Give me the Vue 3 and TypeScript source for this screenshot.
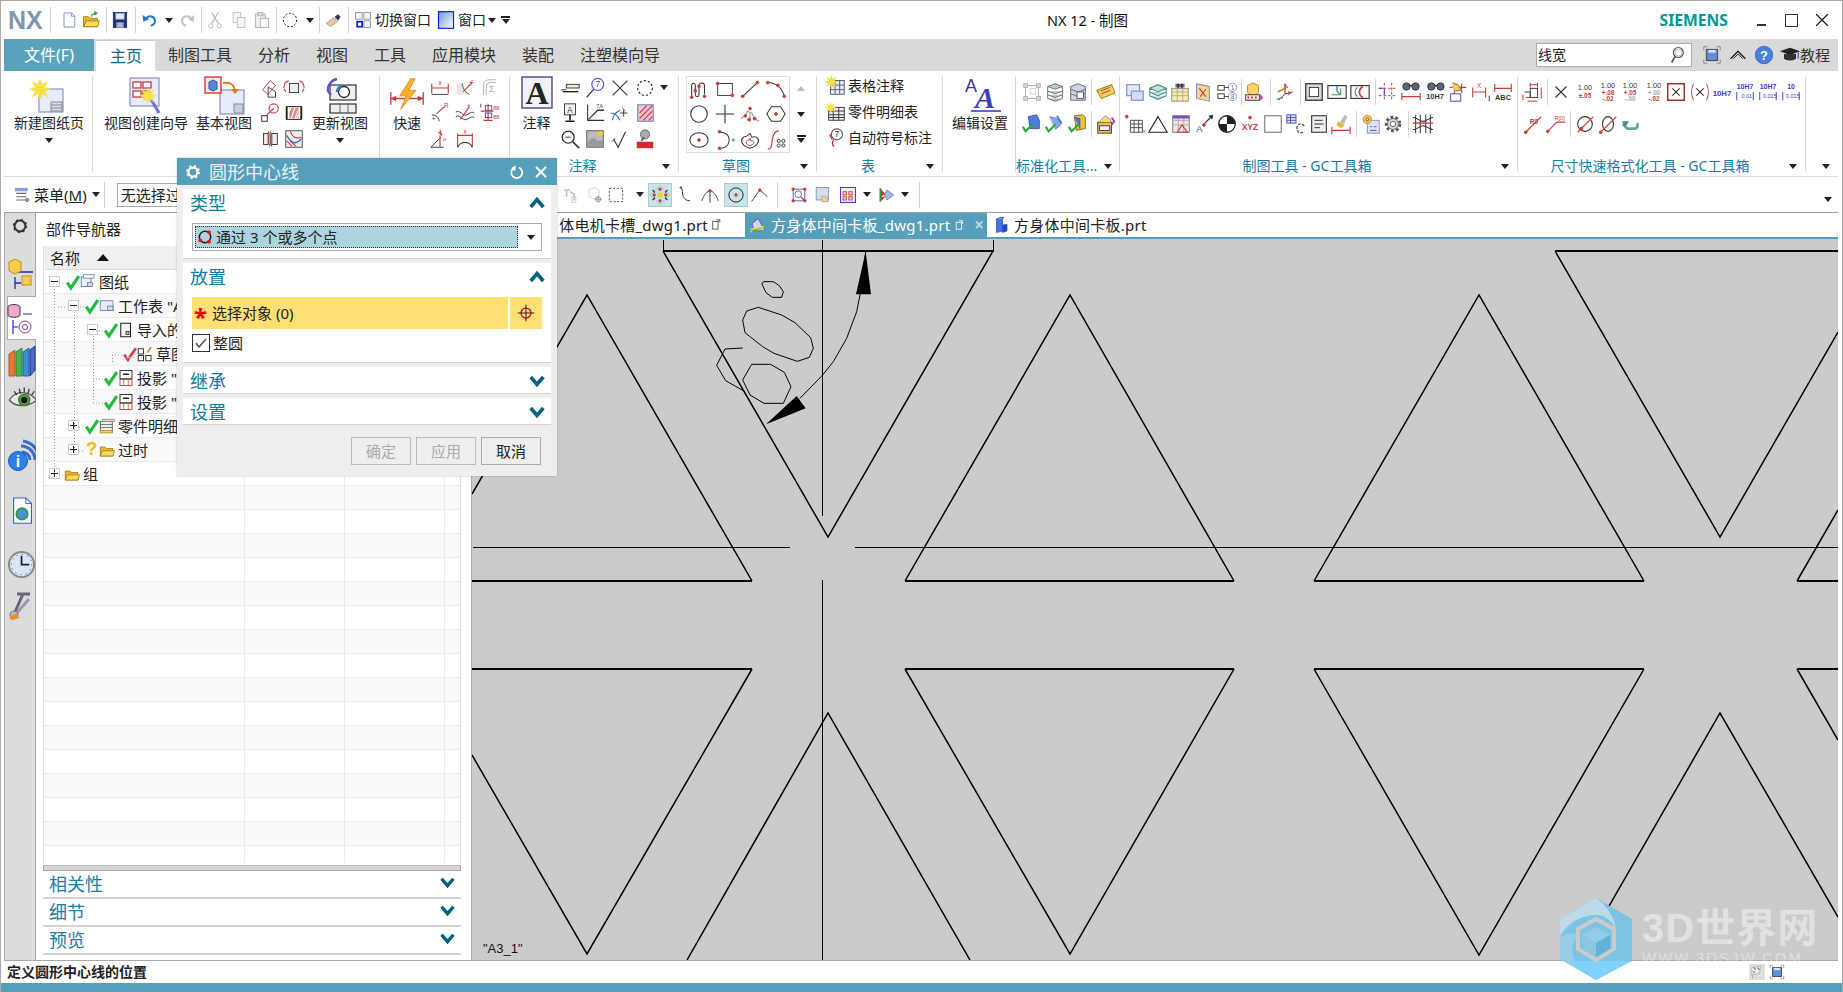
<script setup lang="ts">
import { h } from 'vue'

const RED = '#c93a3a'
const LIL = '#8d8fc9'
const P = (d: string, s = '#333', w = 1, f = 'none') => `<path d="${d}" fill="${f}" stroke="${s}" stroke-width="${w}"/>`
const F = (d: string, f: string) => `<path d="${d}" fill="${f}"/>`
const R = (x: number, y: number, w: number, hh: number, s = '#333', f = 'none', sw = 1) => `<rect x="${x}" y="${y}" width="${w}" height="${hh}" fill="${f}" stroke="${s}" stroke-width="${sw}"/>`
const C = (x: number, y: number, r: number, s = '#333', f = 'none', sw = 1) => `<circle cx="${x}" cy="${y}" r="${r}" fill="${f}" stroke="${s}" stroke-width="${sw}"/>`
const T = (x: number, y: number, t: string, c = '#333', fs = 8, fw = 400, fam = 'Liberation Sans') => `<text x="${x}" y="${y}" fill="${c}" font-size="${fs}" font-weight="${fw}" font-family="${fam}" text-anchor="middle">${t}</text>`
const dot = (x: number, y: number) => C(x, y, 1.5, RED, RED)
const star = (x: number, y: number, r: number) => F(`M${x} ${y - r}l${r * 0.25} ${r * 0.7} ${r * 0.7} -${r * 0.4} -${r * 0.4} ${r * 0.7} ${r * 0.7} ${r * 0.25} -${r * 0.7} ${r * 0.25} ${r * 0.4} ${r * 0.7} -${r * 0.7} -${r * 0.4} -${r * 0.25} ${r * 0.7} -${r * 0.25} -${r * 0.7} -${r * 0.7} ${r * 0.4} ${r * 0.4} -${r * 0.7} -${r * 0.7} -${r * 0.25} ${r * 0.7} -${r * 0.25} -${r * 0.4} -${r * 0.7} ${r * 0.7} ${r * 0.4}z`, '#f5e04a')
const folder = P('M3 8h6l2 2h9v10H3z', '#9a7412', 1, '#e9b92e') + P('M3 20l3-7h16l-2 7z', '#9a7412', 1, '#fbd95c')

const I: Record<string, string> = {
  new: P('M6 3.5h9l4 4v13H6z', '#7b8fd0', 1.2, '#fff') + P('M15 3.5v4h4', '#7b8fd0'),
  open: folder + P('M12 8c1-3 3-4 6-4m-2-2l3 2-3 2', '#3aa03a', 1.6),
  save: R(4, 3, 16, 18, '#1d2f7a', '#1d2f7a') + R(7, 4, 10, 7, '#9ab', '#e4ecf4') + R(8, 15, 8, 6, '#889', '#aeb6c6'),
  undo: P('M7 10c4-4 11-3 11 3 0 3-2 5-5 6', '#2a76c8', 2.4) + F('M3 6l1 8 7-3z', '#2a76c8'),
  redo: P('M17 10c-4-4-11-3-11 3 0 3 2 5 5 6', '#c4c4c4', 2.4) + F('M21 6l-1 8-7-3z', '#c4c4c4'),
  cut: P('M8 3l8 13M16 3L8 16', '#bbb', 1.5) + C(7, 19, 2.6, '#bbb') + C(17, 19, 2.6, '#bbb'),
  copy: R(5, 3, 9, 12, '#bbb', '#f6f6f6') + R(10, 9, 9, 12, '#bbb', '#f6f6f6'),
  paste: R(4, 5, 12, 16, '#aaa', '#eee') + R(10, 10, 10, 11, '#aaa', '#fafafa') + R(7, 3, 6, 4, '#aaa', '#ddd'),
  dcirc: `<circle cx="12" cy="12" r="8" fill="none" stroke="#222" stroke-width="1.2" stroke-dasharray="2.5 2"/>`,
  brush: P('M4 16l9-7 4 5-8 6z', '#a97', 1, '#e8c9a0') + F('M14 8l4-3 3 3-3 5z', '#335'),
  sw: R(3, 3, 8, 8, '#8490a5', '#f2f4f8') + R(13, 3, 8, 8, '#8490a5', '#f2f4f8') + R(13, 13, 8, 8, '#8490a5', '#f2f4f8') + R(5, 14, 6, 6, '#0a18e0', '#fff', 2),
  win: `<defs><linearGradient id="wg" x1="0" y1="0" x2="1" y2="1"><stop offset="0" stop-color="#6f9ad8"/><stop offset="1" stop-color="#fff"/></linearGradient></defs>` + R(3, 2, 18, 20, '#0a20e0', 'url(#wg)', 1.4),

  sheet: R(10, 13, 24, 23, LIL, '#e7ecfa', 1.2) + R(22, 26, 11, 9, '#888', '#d8dcea') + P('M22 29h11M22 32h11', '#888') + star(11, 11, 9),
  wiz: R(4, 2, 29, 28, LIL, '#e7ecfa', 1.2) + R(7, 6, 8, 6, RED, '#fff', 1.3) + R(17, 6, 8, 6, RED, '#fff', 1.3) + R(7, 15, 8, 6, RED, '#fff', 1.3) + R(17, 15, 6, 6, RED, '#fff', 1.3) + P('M22 18l11 19', '#6f6fc8', 3) + star(22, 18, 7),
  basev: R(16, 14, 24, 24, LIL, '#e7ecfa', 1.2) + R(30, 28, 9, 9, '#888', '#ccd') + R(1, 1, 16, 16, '#d33', '#f6e7ea', 1.4) + P('M5 6l4-2 4 2v7l-4 2-4-2z', '#2f5aa8', 1, '#5b87d2') + P('M19 7c7-1 11 1 12 8', '#e07a1a', 2) + F('M27 13h8l-4 5z', '#e07a1a'),
  updv: R(10, 9, 26, 15, '#333', '#eee', 1.2) + R(10, 28, 26, 9, '#333', '#eee', 1.2) + P('M10 31v6M20 28v9M28 28v9', '#666') + C(24, 16, 5.5, '#222', '#fff', 1.3) + P('M17 3a11 11 0 0 0-9 12l3 4', '#5a55d8', 2.4) + P('M22 10a6 6 0 0 0-5 6', '#3c78d0', 2.5),
  quick: P('M2 25h36M2 18v14M38 18v14', RED, 1.5) + F('M2 25l6-3v6zM38 25l-6-3v6z', RED) + F('M24 3L12 22h7l-6 15 17-21h-8l7-13z', '#f3b12c') + P('M24 3L12 22h7l-6 15 17-21h-8l7-13z', '#e57a18', 0.8),
  noteA: R(1, 1, 30, 31, '#3d3a80', '#f1f1f6', 1.3) + T(16, 28, 'A', '#222', 32, 700, 'Liberation Serif'),
  editA: T(11, 16, 'A', '#3e3a9e', 18, 400, 'Liberation Sans') + `<text x="25" y="32" fill="#3e3fb8" font-size="30" font-weight="700" font-style="italic" font-family="Liberation Serif" text-anchor="middle">A</text>` + P('M11 35h30', '#3e3fb8', 1.6),

  a1: P('M4 14l8-10 6 5-8 10z', RED, 1, 'none') + P('M10 11l8 5v6H10z', '#333', 1),
  a2: R(7, 7, 10, 10, '#333', '#eee') + P('M1 12c0-5 2-7 5-8M23 12c0-5-2-7-5-8M1 13l2 3M23 13l-2 3', RED, 1.2),
  a3: C(16, 7, 5, RED, '#fff', 1.2) + P('M4 19l12-12', RED, 1.4) + R(3, 15, 6, 6, '#222', '#fff'),
  a4: R(4, 5, 16, 14, '#222', '#fff') + P('M4 5v14M20 5v14', '#222', 2) + `<rect x="7" y="6" width="10" height="12" fill="#d88"/>` + P('M9 6l-2 4M13 6l-4 12M17 8l-4 10M17 14l-2 4', '#fff', 1.2),
  a5: R(5, 6, 5, 12, '#333', '#eee') + R(14, 6, 6, 12, '#333', '#eee') + P('M10 4c3 4-2 8 2 16', RED, 1.4) + P('M12 4c3 4-2 8 2 16', '#333'),
  a6: R(3, 3, 18, 18, '#444', '#eee') + P('M4 8c6 10 10 10 16 4', '#3f63c8', 1.4) + P('M8 4c2 6 6 8 12 6M4 14l6 6M8 14l6 6', RED, 1.2),
  q1: P('M3 12h18M3 7v11M21 7v11', RED, 1.2) + T(12, 9, 'x', RED, 7) + P('M3 19h18', '#333', 1),
  q2: F('M3 7h6c1 7 4 10 8 12H3z', '#e4e4e4') + P('M9 7c1 7 4 10 8 12', '#444') + P('M10 16L20 6M20 6l-3 0', RED, 1.2) + T(20, 6, 'c', RED, 6),
  q3: P('M6 20V9c0-4 3-6 7-6h7M9 20V11c0-3 2-5 5-5h6', '#bbb', 1.2) + T(15, 16, 'Σ', '#aaa', 10),
  q4: P('M3 14c5 0 8 3 8 7', '#333') + P('M8 13L17 5', RED, 1.2) + T(19, 7, 'R', RED, 7) + T(5, 21, '+', '#333', 7),
  q5: P('M2 11c4-3 8 5 12 3s5-4 8-2M2 16c4-3 8 5 12 3s5-4 8-2', '#333') + P('M7 19L17 5', RED, 1.2) + T(16, 7, '+', RED, 7),
  q6: R(8, 4, 7, 5, '#3f3fb0') + R(8, 12, 7, 5, '#3f3fb0') + P('M3 2v4M3 10h14M11 2v18M6 20h10', RED, 1.2) + T(20, 9, '88', RED, 6) + T(20, 19, '88', RED, 6),
  q7: P('M2 21l11-11M2 21h14', '#333') + P('M12 8v13M10 4l4 4-2-6', RED, 1.2) + T(17, 14, 'o', RED, 6),
  q8: P('M4 6v15M20 6v15M4 8h16', RED, 1.2) + T(12, 6, 'x', RED, 7) + P('M4 21c3-7 13-7 16 0', '#333', 1.2),
  n1: P('M2 14h6', '#333') + R(8, 8, 14, 4, '#333', '#f2e9c8') + P('M4 16h17', '#222', 1.5),
  n2: P('M3 22l8-9', '#333', 1.4) + C(15, 8, 6.5, '#5c5cd0', '#fff', 1.3) + T(15, 11, '7', '#444', 9),
  n3: P('M4 4l16 16M20 4L4 20', '#333', 1.2),
  n5: R(6, 2, 12, 12, '#333', '#f3f3f3') + T(12, 12, 'A', '#333', 9) + P('M12 14v6M7 21h10', '#222', 1.8),
  n6: P('M4 3v17h18', '#333', 1.2) + P('M5 19L15 9h7', '#333', 1.4) + T(17, 7, '7A', '#444', 6) + P('M4 20l6-6', RED),
  n7: P('M2 12c5 0 7 3 10 8M4 20c0-5 4-9 8-11', '#3f63c8', 1.2) + P('M16 8v8M12 12h8', '#333') + P('M14 6l4 4', RED),
  n8: R(4, 3, 17, 18, LIL, '#f3c4cc', 1.4) + P('M6 12l8-8M6 18l14-14M10 20l10-10M16 20l4-4', '#d03a50', 1.3),
  n9: C(10, 10, 6.5, '#333', '#fff', 1.4) + P('M15 15l7 7', '#333', 1.8) + P('M7 10h6', '#333'),
  n10: R(3, 3, 18, 18, '#555', '#bcbcbc') + P('M3 18c5-8 8-8 12-3 3-2 4-1 6 1v5H3z', '#888', .5, '#9a9a9a') + C(18, 6, 2.4, '#ec3', '#ec3'),
  n11: P('M5 12l5 9 8-17', '#333', 1.2) + P('M3 15l4-4', '#333'),
  n12: F('M3 15h18v7H3z', '#d8262c') + C(12, 7, 5, '#666', '#aaa') + P('M8 14l3-4', '#666', 2),
  s1: P('M4 20V8c0-3 4-3 4 0v10c0 3 4 3 4 0V8c0-4 6-3 6 0v10', '#333', 1.1) + dot(4, 21) + dot(12, 9) + dot(18, 20) + dot(8, 14),
  s2: R(4, 6, 16, 13, '#333') + dot(4, 6) + dot(20, 19),
  s3: P('M4 20L20 5', '#333', 1.1) + dot(4, 20) + dot(20, 5),
  s4: P('M3 5c9 0 16 6 18 15', '#333', 1.1) + dot(3, 5) + dot(21, 20) + dot(14, 8),
  s5: C(12, 12, 9, '#333', 'none', 1.2),
  s6: P('M12 2v20M2 12h20', '#333', 1.2),
  s7: P('M2 17l5-3 2-5 5 2 3 6 5 3M12 21V11', '#999', 1.2) + dot(7, 14) + dot(12, 6) + dot(17, 17) + dot(11, 18),
  s8: P('M7 4h10l5 8-5 8H7l-5-8z', '#333', 1.1) + dot(12, 12),
  s9: `<ellipse cx="12" cy="12" rx="10" ry="8" fill="none" stroke="#333" stroke-width="1.1"/>` + dot(12, 12),
  s10: P('M6 3c8 1 12 5 10 12-1 4-5 6-10 6', '#333', 1.1) + dot(6, 3) + dot(6, 21) + C(21, 12, 1.3, '#999', '#999'),
  s11: P('M12 5l2 4c6-2 9 3 6 7-2 3-5 4-8 5-3-1-6-2-8-5-3-4 0-8 4-8z', '#333', 1.1) + P('M12 10l1 3c3-1 4 1 3 3-1 1-3 2-4 2-2 0-4-1-4-3s1-3 3-3z', RED, 1),
  s12: P('M3 22c5 0 4-6 5-11s3-9 7-9', RED, 1.3) + C(15, 13, 1.7, '#333') + C(20, 13, 1.7, '#333') + C(15, 18, 1.7, '#333') + C(20, 18, 1.7, '#333'),
  t1: R(6, 6, 15, 15, '#556', '#e6ecf6') + P('M6 11h15M6 16h15M11 6v15M16 6v15', '#556') + star(7, 6, 6),
  t2: R(4, 7, 17, 14, '#333', '#eee') + P('M4 11h17M4 15h17M4 18h17M9 7v14M15 7v14', '#333') + star(6, 6, 5),
  t3: C(13, 8, 6, '#555', '#fff', 1.2) + T(13, 11, '7', '#333', 9) + P('M10 14c-3 2-2 6 0 7M8 14L5 8', '#c22', 1.3),
  b1: R(5, 5, 14, 14, '#aaa', 'none', 1) + R(3, 3, 4, 4, '#aaa', '#ddd') + R(17, 3, 4, 4, '#aaa', '#ddd') + R(3, 17, 4, 4, '#aaa', '#ddd') + R(17, 17, 4, 4, '#aaa', '#ddd') + R(10, 8, 6, 6, '#ccc', 'none'),
  b2: P('M4 6l8-3 8 3-8 3zM4 11l8 3 8-3M4 15l8 3 8-3M4 19l8 3 8-3M4 6v13M20 6v13', '#667', 1, '#bcd0b8'),
  b3: P('M4 6l8-3 8 3v15H4z', '#667', 1, '#cdd4e6') + P('M4 9l8 3 8-3M4 14l8 3 8-3', '#667') + R(11, 12, 7, 7, '#557', '#fff'),
  b4: P('M2 10l16-6 4 9-15 6z', '#a8831a', 1.1, '#f3d05c') + P('M6 11l10-4M7 14l10-4', '#a33'),
  c1: P('M8 4l9-2 3 6v9H10z', '#3a50a8', 1, '#4d7fd8') + P('M2 15l3 5 8-8', '#2cab3c', 2.4),
  c2: P('M6 4l8 2 5 6-7 6', '#5a6ab0', 1, '#8aa7e6') + P('M14 3l5 8', '#48a', 2) + P('M2 15l3 5 8-8', '#2cab3c', 2.4),
  c3: P('M8 3l9-1 3 3v12l-10 2z', '#88621a', 1, '#f2c23a') + P('M8 5l6 1v11', '#3a50a8', 1, '#4d7fd8') + P('M2 15l3 5 8-8', '#2cab3c', 2.4),
  c4: R(3, 10, 15, 12, '#443', '#f2c23a') + R(5, 14, 11, 5, '#335', '#fff') + P('M5 9l6-6 6 4v3', '#98a', 1, '#f5da72') + P('M18 5l3 4-3 4', '#a040c0', 2),
  d1: R(3, 4, 14, 12, LIL, '#e0e8fa', 1.3) + R(8, 11, 13, 10, LIL, '#d0dcf8', 1.3),
  d2: P('M3 8l9-4 9 4-9 4zM3 12l9 4 9-4M3 16l9 4 9-4M3 8v8M21 8v8', '#4b8a8a', 1.1, '#bfe3d8'),
  d3: R(3, 8, 18, 14, '#888', '#fce9a3') + P('M3 12h18M3 16h18M9 8v14M15 8v14', '#aaa') + F('M7 3h10v4H7z', '#667') + P('M10 3v5M14 3v5', '#334', 1.5),
  d4: P('M5 3l14 3v16l-14-3z', LIL, 1.2, '#f2d68a') + P('M8 8l7 9M15 9l-6 8', '#b37', 1.2),
  d5: R(2, 5, 7, 5, '#333') + R(2, 14, 7, 5, '#333') + C(18, 7, 4.5, LIL) + C(18, 17, 4.5, LIL) + P('M9 7h5M9 17h5', '#333') + T(18, 10, '1', '#669', 7) + T(18, 20, '8', '#669', 7),
  d6: P('M6 5l6-3 6 3v8l-6 3-6-3z', '#c0902a', 1, '#f5d569') + R(4, 15, 15, 6, '#333', '#eee') + P('M6 18h2M10 18h2M14 18h2', RED, 2) + F('M20 14l3 4-3 4z', '#a040c0'),
  d7: P('M12 14V3M12 14l8-2M12 14l-7 7', '#333', 1) + P('M12 3l3 4-3 1zM20 12l-4 3 0-4', RED, 1) + P('M4 12l8-4', '#e0801a', 2) + P('M3 20l7-2', '#2a2', 1.4),
  d8: R(3, 3, 18, 18, '#333', '#ddd', 1.4) + R(7, 7, 10, 10, '#333', '#fff', 1) + P('M4 18l3-3M18 21l3-3', '#999'),
  d9: R(2, 5, 20, 14, '#333', '#f7f7f7', 1.2) + P('M12 5v6l3 3', '#3f63c8', 1.3) + P('M6 15h10M16 8v7', '#2a9a2a'),
  d10: R(2, 5, 20, 14, '#333', '#f7f7f7', 1.2) + P('M15 6c-5 3-5 9 0 12', RED, 1.6) + P('M9 7c-3 3-3 7 0 10', '#3f63c8', 1.2),
  d11: `<path d="M8 2v20M16 2v20M2 8h20M2 16h20" fill="none" stroke="${RED}" stroke-dasharray="3 2"/>` + P('M2 8h5M8 9v6', '#3f3fb0', 1.1),
  d12: C(7, 6, 4, '#333', '#567', 1) + C(17, 6, 4, '#333', '#567', 1) + P('M11 5h2', '#333', 2) + P('M2 17h20M2 13v8M22 13v8', RED, 1.2),
  d13: C(8, 6, 4, '#333', '#567', 1) + C(18, 6, 4, '#333', '#567', 1) + P('M12 5h2', '#333', 2) + T(12, 20, '10H7', '#333', 8, 700),
  d14: P('M3 7h18M8 3v19M16 3v10', RED, 1.2) + R(4, 14, 11, 8, '#3f3fb0', '#fff') + F('M6 2l6 2 4 6-7 1-3-4z', '#f0cb5e') + P('M6 2l6 2 4 6-7 1', '#765'),
  d15: P('M3 12h14M3 7v11M17 7v11', RED, 1.2) + T(10, 8, 'X', RED, 7) + P('M21 16v6', '#333'),
  d16: P('M3 8h18M3 3v9M21 3v9', RED, 1.2) + T(12, 21, 'ABC', '#333', 8, 700),
  e1: `<path d="M7 8h13v13H7zM7 12h13M7 16h13M11 8v13M16 8v13" fill="none" stroke="#444"/>` + dot(3, 4) + T(22, 22, 'x', '#444', 6),
  e2: P('M12 4L22 21H2z', '#222', 1.2),
  e3: R(3, 3, 18, 18, '#777', '#f2e3e3') + P('M3 8h18M3 13h18M9 3v18M15 3v18', '#aaa') + F('M3 3h18v3H3z', '#7c4fb8') + P('M13 13l6 8H8z', RED, 1.2),
  e4: T(7, 21, 'A', '#2f52b8', 10) + P('M13 11l8-8', '#333', 1.4) + F('M22 2l-5 1 4 4z', '#222') + dot(12, 13),
  e5: C(12, 12, 9, '#222', '#fff', 1.4) + F('M12 3a9 9 0 0 1 9 9h-9zM12 12h-9a9 9 0 0 0 9 9z', '#222'),
  e6: dot(12, 5) + T(12, 19, 'XYZ', RED, 9, 700),
  e7: R(3, 3, 18, 18, '#777', '#fff', 1.2),
  e8: R(2, 2, 10, 9, '#4a4ab8', '#e4e4fa') + P('M2 5h10M2 8h10M6 2v9', '#4a4ab8') + `<path d="M21 14c-2-3-8-3-8 3s6 5 8 3" fill="none" stroke="#333" stroke-width="1.3" stroke-dasharray="3 1.5"/>`,
  e9: R(4, 3, 16, 18, '#333', '#eee', 1.2) + P('M7 8h9M7 12h10M7 16h6', '#222'),
  e10: P('M2 19h20M2 15v8M22 15v8', RED, 1.2) + F('M11 10l5-8 3 2-4 8z', '#b8b8c8') + F('M9 9l7 4-4 4-5-4z', '#e0b83a'),
  e11: R(8, 8, 13, 14, LIL, '#d8e4fa') + P('M11 15h2M15 15h3M11 19h7', '#557') + C(8, 7, 4.5, '#c78a20', '#f0c65a', 1) + C(8, 7, 1.5, '#555', '#fff'),
  e12: `<circle cx="12" cy="12" r="7.5" fill="none" stroke="#555" stroke-width="3" stroke-dasharray="3 2.4"/>` + C(12, 12, 6, '#555', '#ddd') + C(12, 12, 3, '#555', '#fff'),
  e13: P('M4 2v20M9 2v20M15 2v20M20 2v20M1 5c6 0 6 4 11 4s6-4 11-4M1 18c6 0 6-4 11-4s6 4 11 4', '#333', 1.1) + P('M1 11h22', RED, 1.5),
  f1: R(9, 8, 8, 10, '#333') + P('M3 12h6v6', '#333') + P('M9 2v5M17 2v5M9 4h8M1 15v6M21 7v12M4 18h5', RED, 1.1) + P('M6 22h11', RED, 1.1),
  f2: P('M6 6l12 12M18 6L6 18', '#333', 1.2),
  f3: T(12, 10, '1.00', '#333', 8) + T(12, 19, '±.05', RED, 7, 700),
  f4: T(12, 8, '1.00', '#333', 8) + T(12, 15, '+.08', RED, 7, 700) + T(12, 22, '-.02', RED, 7, 700),
  f5: T(12, 8, '1.00', '#333', 8) + T(12, 15, '+.05', RED, 7, 700) + T(12, 22, '-.00', '#aaa', 7, 700),
  f6: T(12, 8, '1.00', '#333', 8) + T(12, 15, '+.00', '#aaa', 7, 700) + T(12, 22, '-.02', RED, 7, 700),
  f7: R(3, 3, 18, 18, '#922', 'none', 1.5) + P('M8 8l8 8M16 8l-8 8', '#333', 1.2),
  f8: P('M5 3c-3 5-3 13 0 18M19 3c3 5 3 13 0 18', '#c55', 1.1) + P('M8 8l8 8M16 8l-8 8', '#333', 1.2),
  f9: T(12, 16, '10H7', '#3b3bd8', 8.5, 700),
  f10: T(12, 9, '10H7', '#3b3bd8', 7.5, 700) + T(14, 19, '0.01', '#3b3bd8', 6) + P('M3 12v9M21 12v9', '#3b3bd8'),
  f11: T(12, 9, '10H7', '#3b3bd8', 7.5, 700) + T(14, 19, '0.015', '#3b3bd8', 6) + P('M3 12v9M21 12v9', '#3b3bd8'),
  f12: T(12, 9, '10', '#3b3bd8', 7.5, 700) + T(14, 19, '0.015', '#3b3bd8', 6) + P('M3 12v9M21 12v9', '#3b3bd8'),
  g1: P('M4 21L21 4', RED, 1.3) + dot(4, 21) + T(13, 12, 'R0', RED, 7, 700),
  g2: P('M3 20L13 10h9', RED, 1.2) + dot(3, 20) + T(16, 8, 'R[0]', RED, 6),
  g3: C(12, 12, 8, '#333', 'none', 1.2) + P('M4 21L21 4', RED, 1.3) + dot(8, 17),
  g4: `<ellipse cx="12" cy="12" rx="6" ry="8" fill="none" stroke="#333" stroke-width="1.2"/>` + P('M4 21L21 4', RED, 1.3) + dot(4, 21),
  g5: P('M4 12l5 5h8c3 0 4-3 3-6', '#5aa8a8', 3) + F('M3 9h8l-4 6z', '#3f8f98'),

  ck: P('M3 9l3.5 5L14 3', '#1fbd3c', 3),
  ckr: P('M3 9l3.5 5L14 3', '#d8404a', 2.6) + P('M5 12h8', '#ccc'),
  sh: R(3, 5, 13, 13, '#4f78c0', '#eef3fb', 1.2) + R(6, 2, 14, 5, '#6f88b0', '#f3f3f3') + R(11, 13, 7, 5, '#667', '#d8dcea'),
  shp: R(3, 5, 17, 13, '#6f88c0', '#e5ecf9', 1.2) + R(13, 12, 7, 6, '#667', '#d8dcea'),
  imp: R(5, 3, 13, 18, '#222', '#f3f3f3', 1.4) + R(12, 14, 4, 4, '#222', '#bbb'),
  ske: R(3, 5, 7, 7, '#222', '#fff', 1.2) + R(3, 14, 7, 7, '#222', '#fff', 1.2) + R(13, 14, 7, 7, '#222', '#fff', 1.2) + P('M15 10l5-7', '#d28a20', 2),
  prj: R(4, 2, 16, 11, '#222', '#fff', 1.2) + P('M8 7h8', '#222', 2) + R(4, 14, 16, 8, RED, '#fff', 1.2) + P('M9 14v8M15 14v8', RED),
  bom: R(3, 6, 16, 15, '#333', '#eee') + P('M3 10h16M3 14h16M3 18h16', '#555') + R(6, 3, 16, 3, '#888', '#ddd') + R(3, 18, 16, 3, '#c8a020', '#f2d050'),
  q: T(12, 20, '?', '#e4c312', 26, 700),
  fold: folder,
  gear: `<circle cx="12" cy="12" r="6.5" fill="none" stroke="#333" stroke-width="2.4"/><circle cx="12" cy="12" r="7.5" fill="none" stroke="#333" stroke-width="2.2" stroke-dasharray="2.5 3.4"/>`,
  gearw: `<circle cx="12" cy="12" r="6" fill="none" stroke="#fff" stroke-width="3"/><circle cx="12" cy="12" r="8" fill="none" stroke="#fff" stroke-width="2.6" stroke-dasharray="3 3.3"/>`,
  asm: P('M8 19V31M8 25h6M8 14h18', '#2323c0', 1.3) + P('M2 4l6-3 6 3v9l-6 3-6-3z', '#c08f18', 1, '#f4cd4f') + R(15, 18, 9, 9, '#c08f18', '#f4cd4f'),
  act: `<ellipse cx="8" cy="5" rx="6" ry="2.5" fill="#f0a8c8" stroke="#444"/>` + P('M2 5v8c0 3 12 3 12 0V5', '#444', 1, '#f0a8c8') + P('M17 12h9M7 18v14M7 25h5', '#2323c0', 1.2) + C(19, 25, 6, '#8a3a9a', '#fff') + C(19, 25, 2.5, '#8a3a9a'),
  books: `<path d="M2 10l6-4v26H2z" fill="#e6792a" stroke="#a55"/><path d="M9 8l6-4v28H9z" fill="#4bb24b" stroke="#383"/><path d="M16 8l6-4v28h-6z" fill="#3f8fd8" stroke="#26a"/><path d="M23 6l5-4v24l-5 6z" fill="#4a6ad0" stroke="#238"/>`,
  eye: P('M1 12c5-8 15-8 22 0-7 6-17 6-22 0z', '#555', 1, '#e9e9e9') + C(13, 12, 4.5, '#3a7a2e', '#5c9a3a') + C(13, 12, 2, '#111', '#111') + `<path d="M5 5l2 3M9 3l1 4M13 2v4M17 3l-1 4M21 5l-2 3" stroke="#333"/>`,
  info: P('M14 6a14 14 0 0 1 14 14M16 1a19 19 0 0 1 16 16', '#3a6ad0', 3) + P('M15 12a8 8 0 0 1 8 8', '#3a6ad0', 3) + C(11, 21, 9.5, '#1855c0', '#2a7fe8') + T(11, 27, 'i', '#fff', 16, 700),
  doc: P('M6 1h13l6 6v21H6z', '#3a5fd0', 1.2, '#fff') + P('M19 1v6h6', '#3a5fd0') + C(15, 18, 6, '#2f9a50', '#4b8fd8', 2),
  clock: C(15, 15, 13, '#888', '#d8e6fa', 2) + P('M15 6v9h8', '#222', 1.8) + `<circle cx="15" cy="15" r="10.5" fill="none" stroke="#333" stroke-dasharray="1 4.5"/>`,
  tool: P('M10 3h13M16 3l-8 18', '#667', 3) + P('M22 8l-14 16', '#99a', 3) + C(7, 24, 4, '#778', '#bbc') + F('M2 26l7-3 4 4-9 2z', '#f28c28'),
  mag: C(10, 9, 6, '#555', '#fff', 1.4) + C(10, 9, 4, '#aaa') + P('M6 14l-4 7', '#555', 2),
  help: C(12, 12, 9.5, '#3d6bc8', '#4a7fdc') + T(12, 17, '?', '#fff', 14, 700),
  hat: F('M1 8l11-4 11 4-11 4z', '#222') + P('M6 11v5c4 2 8 2 12 0v-5', '#222', 1, '#333') + P('M21 9v7', '#2c6fd0', 1.5),
  fit: P('M3 7V3h4M17 3h4v4M21 17v4h-4M7 21H3v-4', '#888') + R(6, 6, 12, 12, '#556', '#5f8fd8', 1.4) + `<rect x="8" y="6.5" width="8" height="3" fill="#d8e0ee"/>`,
  up: P('M4 16l8-8 8 8', '#222', 1.6) + P('M7 16l5-5 5 5', '#222', 1),
  flag: R(2, 2, 20, 20, '#ddd', '#ddd') + P('M5 6l12-2-2 10-10 2zM6 16v5', '#aaa', 1, '#eee') + P('M8 6l2 3M13 6l2 3M7 11l2 2', '#888', 2),
  menu: R(3, 4, 14, 3, LIL, '#8aa0ea') + P('M4 10h12M4 14h12M4 18h14', '#666', 1.3) + C(17, 18, 2, '#666', '#aaa'),
  ttool: `<path d="M5 6h7M8 6v8M12 8l5 3v8" fill="none" stroke="#c4c4c4" stroke-width="2"/>` + R(14, 14, 5, 7, '#ccc'),
  tcube: `<path d="M6 6l6-3 6 3v8l-6 3-6-3z" fill="none" stroke="#bbb" stroke-dasharray="2 1"/>` + C(17, 17, 3, '#888') + P('M13 17h8M17 13v8', '#888'),
  tdash: `<rect x="4" y="4" width="16" height="16" fill="none" stroke="#333" stroke-dasharray="2.5 2"/>`,
  tact: `<rect x="4" y="4" width="16" height="16" transform="rotate(45 12 12)" fill="none" stroke="#888" stroke-dasharray="2 2"/>` + F('M9 9h6v6H9z', '#f0d32a') + dot(12, 5) + dot(12, 19) + dot(5, 12) + dot(19, 12) + P('M3 6l3 3M21 6l-3 3M3 18l3-3M21 18l-3-3', '#333', 1.3),
  tcurve: P('M7 3c3 2 1 7 3 11 2 3 4 5 8 5', '#333', 1.2) + C(7, 3, 1, '#333'),
  tcross: P('M12 7v14M2 19c3-8 7-12 10-12s7 4 10 12', '#333', 1.1) + dot(12, 7),
  tcirc: C(12, 12, 8.5, '#222', 'none', 1.2) + dot(12, 12),
  tang: P('M3 20L13 6l9 8', '#333', 1.1) + dot(13, 6),
  tfit: R(5, 5, 14, 14, '#3f3fd0', 'none') + C(11, 11, 4, '#555') + P('M14 14l4 4', '#555', 1.3) + dot(5, 5) + dot(19, 5) + dot(5, 19) + dot(19, 19),
  thand: R(5, 3, 15, 15, '#888', '#d3dcea') + P('M12 12v8h7v-5l-4-2', '#b98', 1, '#e9cfa8'),
  ttbl: R(3, 3, 18, 18, '#3f3fd0', '#eee', 1.3) + R(6, 8, 4, 4, RED, '#f7c0c0') + R(13, 8, 4, 4, RED, '#f7c0c0') + R(6, 14, 4, 4, RED, '#f7c0c0') + R(13, 14, 4, 4, RED, '#f7c0c0'),
  tmix: F('M4 4l6 7-6 3zM4 14l6 0-6 6z', RED) + P('M4 4v16', '#2a9a2a', 2) + P('M12 6l8 6-8 6-3-6z', '#779', 1, '#a9b9e6'),
  extl: R(3, 6, 9, 13, '#333', 'none', 1.3) + P('M9 3h6v5M15 3l-3 3', '#333', 1.2),
  ext: R(4, 6, 10, 13, '#fff', 'none', 1.6) + P('M9 3h7v6', '#fff', 1.4),
  dwg: P('M4 10l8-7 8 14H6z', '#5b60d8', 1.4, '#cfd6f4') + P('M2 18L20 14M2 21L20 17', '#f0d83a', 2) + P('M4 20h12', '#3ea04a', 2),
  prt: P('M6 4l8-2v18l-8 2z', '#2a52c8', 1, '#3f74e0') + P('M14 12l6-1v9l-6 2z', '#2a52c8', 1, '#1f49b4') + P('M6 4l4-2 6 0-2 2', '#2a52c8', 1, '#7da8f4'),
  tcircle: C(12, 12, 8.5, '#1d1d1d', 'none', 2.2) + C(18, 5, 2.4, '#e01818', '#e01818') + C(5, 17, 2.4, '#e01818', '#e01818') + C(18, 19, 2.4, '#e01818', '#e01818'),
  tgt: C(12, 12, 6, '#e00', 'none', 1.5) + P('M12 2v20M2 12h20', '#222', 1.2)
}

type IcoProps = { n: string; s?: number; vb?: number }
const Ico = (p: IcoProps) => h('svg', {
  class: 'ico', width: p.s ?? 22, height: p.s ?? 22, viewBox: `0 0 ${p.vb ?? 24} ${p.vb ?? 24}`, innerHTML: I[p.n]
})
Ico.props = ['n', 's', 'vb']

function seat(list: [string, number][], size: number, origin: number) {
  let r = origin
  return list.map(([n, cx]) => {
    const w = n === '|' ? 1 : n === 'v' ? 9 : size
    const left = cx - w / 2
    const ml = left - r
    r = left + w
    return { n, ml, w }
  })
}

const qa = seat([['new', 68], ['open', 90], ['|', 105], ['save', 119], ['|', 134], ['undo', 149], ['v', 168], ['redo', 187], ['|', 201], ['cut', 215], ['copy', 239], ['paste', 262], ['|', 276], ['dcirc', 290], ['v', 310], ['|', 320], ['brush', 334], ['|', 349], ['sw', 364]], 20, 50)
const g2s = ['a1', 'a2', 'a3', 'a4', 'a5', 'a6']
const g3s = ['q1', 'q2', 'q3', 'q4', 'q5', 'q6', 'q7', 'q8']
const g4s = ['n1', 'n2', 'n3', 'dcirc', '', 'n5', 'n6', 'n7', 'n8', '', 'n9', 'n10', 'n11', 'n12', '']
const g5s = ['s1', 's2', 's3', 's4', 's5', 's6', 's7', 's8', 's9', 's10', 's11', 's12']
const g6s: [string, string][] = [['t1', '表格注释'], ['t2', '零件明细表'], ['t3', '自动符号标注']]
const g8s = ['b1', 'b2', 'b3', '|', 'b4', 'c1', 'c2', 'c3', '|', 'c4']
const g9a = seat([['d1', 1135], ['d2', 1158], ['d3', 1180], ['d4', 1203], ['d5', 1227], ['|', 1241], ['d6', 1253], ['|', 1270], ['d7', 1285], ['|', 1300], ['d8', 1314], ['d9', 1337], ['d10', 1360], ['|', 1375], ['d11', 1388], ['d12', 1411], ['d13', 1435], ['d14', 1458], ['d15', 1481], ['d16', 1503]], 22, 1120)
const g9b = seat([['e1', 1135], ['e2', 1158], ['e3', 1181], ['e4', 1204], ['e5', 1227], ['e6', 1250], ['e7', 1273], ['e8', 1296], ['e9', 1319], ['e10', 1341], ['|', 1356], ['e11', 1371], ['e12', 1393], ['|', 1408], ['e13', 1423]], 22, 1120)
const g10a = seat([['f1', 1533], ['|', 1547], ['f2', 1561], ['f3', 1585], ['f4', 1608], ['f5', 1630], ['f6', 1654], ['f7', 1676], ['f8', 1700], ['f9', 1722], ['f10', 1745], ['f11', 1768], ['f12', 1791]], 22, 1518)
const g10b = seat([['g1', 1533], ['g2', 1556], ['|', 1570], ['g3', 1585], ['g4', 1608], ['g5', 1630]], 22, 1518)
const tb2 = seat([['ttool', 569], ['tcube', 593], ['tdash', 615], ['v', 640], ['tact', 660], ['tcurve', 685], ['tcross', 710], ['tcirc', 736], ['tang', 759], ['|', 778], ['tfit', 799], ['thand', 822], ['ttbl', 848], ['v', 868], ['tmix', 888], ['v', 907], ['|', 922]], 22, 556)

const side: { n: string; hh: number; s: number; on?: boolean }[] = [
  { n: 'gear', hh: 26, s: 20 }, { n: 'asm', hh: 45, s: 32 }, { n: 'act', hh: 44, s: 32, on: true }, { n: 'books', hh: 40, s: 32 },
  { n: 'eye', hh: 40, s: 30 }, { n: 'info', hh: 72, s: 32 }, { n: 'doc', hh: 40, s: 30 }, { n: 'clock', hh: 66, s: 31 }, { n: 'tool', hh: 18, s: 32 }
]

type Row = { d: number; e?: string; c?: string; i?: string; t?: string }
const rows: Row[] = [
  { d: 0, e: '-', c: 'ck', i: 'sh', t: '图纸' },
  { d: 1, e: '-', c: 'ck', i: 'shp', t: '工作表 "A' },
  { d: 2, e: '-', c: 'ck', i: 'imp', t: '导入的' },
  { d: 3, c: 'ckr', i: 'ske', t: '草图' },
  { d: 2, c: 'ck', i: 'prj', t: '投影 "' },
  { d: 2, c: 'ck', i: 'prj', t: '投影 "' },
  { d: 1, e: '+', c: 'ck', i: 'bom', t: '零件明细' },
  { d: 1, e: '+', c: 'q', i: 'fold', t: '过时' },
  { d: 0, e: '+', i: 'fold', t: '组' },
  ...Array.from({ length: 16 }, () => ({ d: -1 }))
]

const thick: number[][] = [[663, 251, 993, 251], [472, 581, 752, 581], [905, 581, 1234, 581], [1314, 581, 1644, 581], [1555, 251, 1838, 251], [1797, 581, 1838, 581], [472, 669, 752, 669], [905, 669, 1234, 669], [1314, 669, 1644, 669], [1797, 669, 1838, 669]]
const slant: string[] = [
  '663,251 828,537 993,251', '472,494 587,295 752,581', '905,581 1070,295 1234,581', '1314,581 1479,295 1644,581',
  '1555,251 1720,537 1838,332', '1797,581 1838,510', '752,669 587,954 472,755', '905,669 1070,954 1234,669',
  '1314,669 1479,955 1644,669', '687,960 828,713 970,960', '1578,960 1720,713 1838,917', '1797,669 1838,740'
]
const thin: number[][] = [[663, 239, 663, 251], [993, 239, 993, 251], [822, 239, 822, 515], [822, 579, 822, 960], [472, 547, 789, 547], [854, 547, 1838, 547]]
const sketch: string[] = [
  '215,130 222,125 250,125 268,137 280,155 275,172 247,172 228,158 215,130',
  '205,202 275,225 315,248 362,293 370,325 358,352 322,364 252,340 218,320 165,278 158,240 170,213 205,202',
  '185,373 242,373 283,397 303,440 280,490 222,490 180,465 158,420 185,373',
  '158,324 105,327 80,376 107,422 165,455',
  '527,35 510,165 500,215 470,295 430,365 398,405 330,475'
]
</script>

<template>
  <div class="app">
    <header class="title">
      <div class="qa">
        <b class="nx">NX</b>
        <i class="vs first"></i>
        <template v-for="q in qa" :key="q.n + q.ml">
          <i v-if="q.n === '|'" class="vs" :style="{ marginLeft: q.ml + 'px' }"></i>
          <i v-else-if="q.n === 'v'" class="dd" :style="{ marginLeft: q.ml + 'px' }"></i>
          <span v-else class="seat" :style="{ marginLeft: q.ml + 'px', width: q.w + 'px' }"><Ico :n="q.n" :s="20" /></span>
        </template>
        <span class="qt first-t">切换窗口</span>
        <span class="win"><Ico n="win" :s="20" /></span>
        <span class="qt">窗口</span>
        <i class="dd wd"></i>
        <span class="more"><i class="ln"></i><i class="dd"></i></span>
      </div>
      <div class="apptitle">NX 12 - 制图</div>
      <div class="rt">
        <span class="siemens">SIEMENS</span>
        <i class="wmin"></i>
        <i class="wmax"></i>
        <svg class="wcl" width="12" height="12" viewBox="0 0 12 12"><path d="M0 0l12 12M12 0L0 12" stroke="#222" stroke-width="1.3" /></svg>
      </div>
    </header>

    <nav class="tabs">
      <span class="file">文件(F)</span>
      <span class="tab on">主页</span>
      <span class="tab">制图工具</span>
      <span class="tab">分析</span>
      <span class="tab">视图</span>
      <span class="tab">工具</span>
      <span class="tab">应用模块</span>
      <span class="tab">装配</span>
      <span class="tab">注塑模向导</span>
      <div class="tabs-r">
        <div class="search"><span>线宽</span><Ico n="mag" :s="20" /></div>
        <span class="tr-ic"><Ico n="fit" :s="22" /></span>
        <span class="tr-ic"><Ico n="up" :s="22" /></span>
        <span class="tr-ic"><Ico n="help" :s="22" /></span>
        <span class="tr-ic"><Ico n="hat" :s="22" /></span>
        <span class="tut">教程</span>
      </div>
    </nav>

    <section class="ribbon">
      <div class="group g1">
        <div class="gbody">
          <div class="big w70"><span class="bi"><Ico n="sheet" :s="40" :vb="40" /></span><span class="bl">新建图纸页</span><i class="dd"></i></div>
        </div>
      </div>
      <div class="group g2">
        <div class="gbody">
          <div class="big w84"><span class="bi"><Ico n="wiz" :s="40" :vb="40" /></span><span class="bl">视图创建向导</span></div>
          <div class="big w56 m8"><span class="bi"><Ico n="basev" :s="40" :vb="40" /></span><span class="bl">基本视图</span></div>
          <div class="sg c24 m6"><span v-for="n in g2s" :key="n" class="gc"><Ico :n="n" /></span></div>
          <div class="big w56 m6"><span class="bi"><Ico n="updv" :s="40" :vb="40" /></span><span class="bl">更新视图</span><i class="dd"></i></div>
        </div>
      </div>
      <div class="group g3">
        <div class="gbody">
          <div class="big w28"><span class="bi"><Ico n="quick" :s="36" :vb="40" /></span><span class="bl">快速</span></div>
          <div class="sg c3 m7"><span v-for="n in g3s" :key="n" class="gc"><Ico :n="n" /></span></div>
        </div>
      </div>
      <div class="group g4">
        <div class="gbody">
          <div class="big w29"><span class="bi"><Ico n="noteA" :s="32" :vb="32" /></span><span class="bl">注释</span></div>
          <div class="sg c5 m6">
            <span v-for="(n, ix) in g4s" :key="ix" class="gc"><Ico v-if="n" :n="n" /><i v-else-if="ix === 4" class="dd"></i></span>
          </div>
        </div>
        <div class="gfoot"><span>注释</span><i class="dd"></i></div>
      </div>
      <div class="group g5">
        <div class="gbody">
          <div class="skbox"><span v-for="n in g5s" :key="n" class="gc"><Ico :n="n" /></span></div>
          <div class="scroll"><i class="dd up"></i><i class="dd"></i><i class="dd bar"></i></div>
        </div>
        <div class="gfoot"><span>草图</span><i class="dd"></i></div>
      </div>
      <div class="group g6">
        <div class="gbody col">
          <div v-for="r in g6s" :key="r[1]" class="tblrow"><Ico :n="r[0]" /><span>{{ r[1] }}</span></div>
        </div>
        <div class="gfoot"><span>表</span><i class="dd"></i></div>
      </div>
      <div class="group g7">
        <div class="gbody">
          <div class="big w56"><span class="bi"><Ico n="editA" :s="40" :vb="40" /></span><span class="bl">编辑设置</span></div>
        </div>
      </div>
      <div class="group g8">
        <div class="gbody">
          <div class="sg8">
            <template v-for="(n, ix) in g8s" :key="ix">
              <i v-if="n === '|'" class="vs"></i>
              <span v-else class="gc"><Ico :n="n" /></span>
            </template>
          </div>
        </div>
        <div class="gfoot"><span>标准化工具...</span><i class="dd"></i></div>
      </div>
      <div class="group g9">
        <div class="gbody col">
          <div class="srow">
            <template v-for="q in g9a" :key="q.n + q.ml">
              <i v-if="q.n === '|'" class="vs" :style="{ marginLeft: q.ml + 'px' }"></i>
              <span v-else class="seat" :style="{ marginLeft: q.ml + 'px', width: q.w + 'px' }"><Ico :n="q.n" /></span>
            </template>
          </div>
          <div class="srow">
            <template v-for="q in g9b" :key="q.n + q.ml">
              <i v-if="q.n === '|'" class="vs" :style="{ marginLeft: q.ml + 'px' }"></i>
              <span v-else class="seat" :style="{ marginLeft: q.ml + 'px', width: q.w + 'px' }"><Ico :n="q.n" /></span>
            </template>
          </div>
        </div>
        <div class="gfoot"><span>制图工具 - GC工具箱</span><i class="dd"></i></div>
      </div>
      <div class="group g10">
        <div class="gbody col">
          <div class="srow">
            <template v-for="q in g10a" :key="q.n + q.ml">
              <i v-if="q.n === '|'" class="vs" :style="{ marginLeft: q.ml + 'px' }"></i>
              <span v-else class="seat" :style="{ marginLeft: q.ml + 'px', width: q.w + 'px' }"><Ico :n="q.n" /></span>
            </template>
          </div>
          <div class="srow">
            <template v-for="q in g10b" :key="q.n + q.ml">
              <i v-if="q.n === '|'" class="vs" :style="{ marginLeft: q.ml + 'px' }"></i>
              <span v-else class="seat" :style="{ marginLeft: q.ml + 'px', width: q.w + 'px' }"><Ico :n="q.n" /></span>
            </template>
          </div>
        </div>
        <div class="gfoot"><span>尺寸快速格式化工具 - GC工具箱</span><i class="dd"></i></div>
      </div>
      <div class="group g11">
        <div class="gbody"></div>
        <div class="gfoot"><b></b><i class="dd"></i></div>
      </div>
    </section>

    <section class="tb2">
      <span class="mi"><Ico n="menu" :s="20" /></span>
      <span class="mt">菜单(<u>M</u>)</span>
      <i class="dd"></i>
      <i class="vs sv"></i>
      <div class="sel">无选择过</div>
      <template v-for="q in tb2" :key="q.n + q.ml">
        <i v-if="q.n === '|'" class="vs" :style="{ marginLeft: q.ml + 'px' }"></i>
        <i v-else-if="q.n === 'v'" class="dd" :style="{ marginLeft: q.ml + 'px' }"></i>
        <span v-else class="seat" :class="{ act: q.n === 'tact' || q.n === 'tcirc' }" :style="{ marginLeft: q.ml + 'px', width: q.w + 'px' }"><Ico :n="q.n" :s="20" /></span>
      </template>
      <i class="dd tb-end"></i>
    </section>

    <main class="work">
      <aside class="side">
        <span v-for="s in side" :key="s.n" class="si" :class="{ on: s.on, gearcell: s.n === 'gear' }" :style="{ height: s.hh + 'px' }"><Ico :n="s.n" :s="s.s" :vb="s.n === 'gear' || s.n === 'eye' ? 24 : 32" /></span>
      </aside>
      <div class="nav">
        <div class="navtitle">部件导航器</div>
        <div class="tbl">
          <div class="thead"><span>名称</span><svg width="12" height="7" viewBox="0 0 12 7"><path d="M0 7L6 0l6 7z" fill="#111" /></svg></div>
          <div v-for="(r, ix) in rows" :key="ix" class="row" :class="{ alt: ix % 2 === 1 }">
            <div class="cell0" :style="{ paddingLeft: r.d >= 0 ? 5 + r.d * 19 + 'px' : '0' }">
              <template v-if="r.d >= 0">
                <i class="exp" :class="{ none: !r.e, plus: r.e === '+' }"></i>
                <span v-if="r.c" class="cs"><Ico :n="r.c" :s="17" :vb="r.c === 'q' ? 24 : 16" /></span>
                <span class="cs"><Ico :n="r.i as string" :s="18" /></span>
                <span class="rt-text">{{ r.t }}</span>
              </template>
            </div>
            <div class="cell"></div><div class="cell"></div><div class="cell"></div>
          </div>
          <svg class="dots" viewBox="43 245 150 240" width="150" height="240">
            <path d="M53.5 288V474M73.5 311V450M92.5 335V402M111.5 354V362" stroke="#999" stroke-dasharray="1 2" fill="none" />
            <path d="M73 306h10M92 330h10M111 354h14M92 378h12M92 402h12M78 426h6M78 450h6M58 474h6M58 282h6M57 306h10" stroke="#999" stroke-dasharray="1 2" fill="none" />
          </svg>
        </div>
        <div class="split"></div>
        <div class="nsec"><span>相关性</span><svg class="chev" width="15" height="11" viewBox="0 0 14 10"><path d="M1.500 1.500L7 8l5.500-6.500" fill="none" stroke="#07627f" stroke-width="3.200" /></svg></div>
        <div class="nsec"><span>细节</span><svg class="chev" width="15" height="11" viewBox="0 0 14 10"><path d="M1.500 1.500L7 8l5.500-6.500" fill="none" stroke="#07627f" stroke-width="3.200" /></svg></div>
        <div class="nsec"><span>预览</span><svg class="chev" width="15" height="11" viewBox="0 0 14 10"><path d="M1.500 1.500L7 8l5.500-6.500" fill="none" stroke="#07627f" stroke-width="3.200" /></svg></div>
      </div>
      <div class="right">
        <div class="doctabs">
          <div class="dt first"><span>体电机卡槽_dwg1.prt</span><Ico n="extl" :s="14" /></div>
          <div class="dt on"><Ico n="dwg" :s="18" /><span>方身体中间卡板_dwg1.prt</span><Ico n="ext" :s="13" /><em>×</em></div>
          <div class="dt"><Ico n="prt" :s="18" /><span>方身体中间卡板.prt</span></div>
        </div>
        <div class="canvas">
          <svg class="draw" width="1366" height="721" viewBox="472 239 1366 721">
            <g shape-rendering="crispEdges">
              <line v-for="(l, ix) in thick" :key="ix" :x1="l[0]" :y1="l[1]" :x2="l[2]" :y2="l[3]" stroke="#000" stroke-width="2" />
              <line v-for="(l, ix) in thin" :key="'t' + ix" :x1="l[0] + .5" :y1="l[1] + .5" :x2="l[2] + .5" :y2="l[3] + .5" stroke="#000" stroke-width="1" />
            </g>
            <polyline v-for="(p, ix) in slant" :key="'s' + ix" :points="p" fill="none" stroke="#000" stroke-width="1.5" />
            <g transform="translate(690 240) scale(.33333)">
              <polyline v-for="(p, ix) in sketch" :key="'k' + ix" :points="p" fill="none" stroke="#000" stroke-width="3" />
              <path d="M527 35L498 163H543zM228 553L320 468L347 505z" fill="#000" />
            </g>
          </svg>
          <span class="sheetname">"A3_1"</span>
        </div>
      </div>
    </main>

    <footer class="status">
      <span>定义圆形中心线的位置</span>
      <span class="st-ic"><Ico n="flag" :s="18" /><Ico n="fit" :s="18" /></span>
    </footer>
    <div class="teal"></div>

    <div class="dialog">
      <div class="dhead">
        <Ico n="gearw" :s="18" />
        <span class="dtitle">圆形中心线</span>
        <svg class="drefresh" width="14" height="14" viewBox="0 0 14 14"><path d="M9 2.500A5.500 5.500 0 1 1 3 3.500" fill="none" stroke="#fff" stroke-width="1.800" /><path d="M5.500 0v6L1.500 3z" fill="#fff" transform="rotate(10 3 3)" /></svg>
        <svg class="dclose" width="12" height="12" viewBox="0 0 12 12"><path d="M1 1l10 10M11 1L1 11" stroke="#fff" stroke-width="2" /></svg>
      </div>
      <div class="dsec s1">
        <div class="shead"><span>类型</span><svg width="16" height="12" viewBox="0 0 14 10"><path d="M1.500 8.500L7 2l5.500 6.500" fill="none" stroke="#07627f" stroke-width="3.200" /></svg></div>
        <div class="combo">
          <div class="cin"><Ico n="tcircle" :s="16" /><span>通过 3 个或多个点</span></div>
          <i class="dd"></i>
        </div>
      </div>
      <div class="dsec s2">
        <div class="shead tall"><span>放置</span><svg width="16" height="12" viewBox="0 0 14 10"><path d="M1.500 8.500L7 2l5.500 6.500" fill="none" stroke="#07627f" stroke-width="3.200" /></svg></div>
        <div class="pick">
          <div class="pl"><b>*</b><span>选择对象 (0)</span></div>
          <div class="pr"><Ico n="tgt" :s="20" /></div>
        </div>
        <div class="chk">
          <i class="box"><svg width="14" height="12" viewBox="0 0 14 12"><path d="M2 6l3 4 7-8" fill="none" stroke="#555" stroke-width="1.500" /></svg></i>
          <span>整圆</span>
        </div>
      </div>
      <div class="dsec s3">
        <div class="shead"><span>继承</span><svg width="16" height="12" viewBox="0 0 14 10"><path d="M1.500 1.500L7 8l5.500-6.500" fill="none" stroke="#07627f" stroke-width="3.200" /></svg></div>
      </div>
      <div class="dsec s3">
        <div class="shead"><span>设置</span><svg width="16" height="12" viewBox="0 0 14 10"><path d="M1.500 1.500L7 8l5.500-6.500" fill="none" stroke="#07627f" stroke-width="3.200" /></svg></div>
      </div>
      <div class="dbtns">
        <button class="off">确定</button>
        <button class="off">应用</button>
        <button>取消</button>
      </div>
    </div>

    <div class="wm">
      <svg width="73" height="84" viewBox="0 0 73 84">
        <path d="M36 1L72 22V62L36 83L0 62V22z" fill="#7cc3e4" />
        <path d="M36 1L0 22V40C8 24 24 18 36 18C46 18 52 24 56 33C54 18 46 8 36 1z" fill="#bcdae8" />
        <path d="M0 40V62L24 76C14 66 6 50 20 36C12 36 4 38 0 40z" fill="#97cde6" />
        <path d="M8 64h64L36 83z" fill="#81d2fb" />
        <path d="M36 22L54 32V52L36 63L18 52V32z" fill="none" stroke="#cbcbcb" stroke-width="4" />
        <path d="M36 30L50 38L36 46L22 38z" fill="#92cce8" />
        <path d="M22 38L36 46V60L22 52z" fill="#8bc6e2" />
        <path d="M36 46L50 38V52L36 60z" fill="#63b2d9" />
      </svg>
      <div class="wmt">
        <div class="wm1">3D世界网</div>
        <div class="wm2">WWW.3DSJW.COM</div>
      </div>
    </div>
  </div>
</template>

<style scoped>
.app {
  position: relative;
  width: 1843px;
  height: 992px;
  overflow: hidden;
  box-sizing: border-box;
  background: #fff;
  border-top: 1px solid #aaa;
  border-left: 1px solid #aaa;
  border-right: 1px solid #aaa;
  font-family: "Noto Sans", "Noto Sans CJK SC", sans-serif;
  color: #222;
  display: flex;
  flex-direction: column;
}
i { font-style: normal; display: block; flex: none; }
.ico { display: block; flex: none; overflow: visible; }
.dd { width: 0; height: 0; border-left: 4.5px solid transparent; border-right: 4.5px solid transparent; border-top: 5px solid #222; flex: none; }
.dd.up { border-top: 0; border-bottom: 5px solid #bbb; }
.vs { width: 1px; height: 26px; background: #d4d4d4; flex: none; }
.seat { display: flex; justify-content: center; align-items: center; flex: none; }

.title { height: 38px; display: flex; align-items: center; flex: none; }
.qa { width: 1046px; display: flex; align-items: center; flex: none; height: 38px; }
.nx { width: 49px; padding-left: 7px; box-sizing: border-box; font: 700 25px/30px "Liberation Sans", sans-serif; color: #7f96ad; }
.qt { font-size: 14px; line-height: 20px; white-space: nowrap; flex: none; }
.first-t { margin-left: 2px; }
.win { margin: 0 2px 0 5px; flex: none; }
.qa .wd { margin-left: 2px; }
.more { margin-left: 5px; display: flex; flex-direction: column; gap: 1px; align-items: center; }
.ln { width: 9px; height: 2px; background: #222; }
.apptitle { font-size: 14.5px; line-height: 20px; white-space: nowrap; color: #111; }
.rt { margin-left: auto; display: flex; align-items: center; margin-right: 14px; }
.siemens { font: 700 15.7px/20px "Noto Sans", sans-serif; color: #009999; margin-right: 29px; }
.wmin { width: 9px; height: 2px; background: #333; margin-top: 9px; margin-right: 19px; }
.wmax { width: 11px; height: 11px; border: 1px solid #333; margin-right: 18px; }

.tabs { height: 32px; background: #d9d9d9; display: flex; align-items: stretch; margin-left: 3px; margin-right: 4px; flex: none; font-size: 16px; line-height: 32px; }
.file { width: 90px; background: #5aa2b9; color: #fff; text-align: center; font-size: 16px; margin-right: 2px; }
.tab { padding: 0 13px; color: #333; white-space: nowrap; }
.tab.on { background: #fff; color: #086a8c; padding: 0 13px 0 14px; margin-top: 1px; border-top: 1px solid #ccc; line-height: 30px; }
.tabs-r { margin-left: auto; display: flex; align-items: center; }
.search { width: 156px; height: 24px; box-sizing: border-box; background: #fff; border: 1px solid #aaa; display: flex; align-items: center; justify-content: space-between; font-size: 14px; line-height: 20px; padding: 0 1px; margin-right: 9px; }
.tr-ic { margin-right: 4px; display: flex; }
.tut { font-size: 15px; margin: 0 8px 0 -5px; line-height: 20px; color: #333; }

.ribbon { height: 105px; display: flex; margin-left: 3px; margin-right: 4px; border-bottom: 1px solid #dcdcdc; flex: none; }
.group { box-sizing: border-box; height: 96px; margin-top: 5px; border-right: 1px solid #d8d8d8; display: flex; flex-direction: column; flex: none; position: relative; }
.gbody { height: 80px; display: flex; flex: none; }
.gbody.col { flex-direction: column; }
.gfoot { height: 20px; display: flex; align-items: center; flex: none; font-size: 14px; line-height: 20px; color: #127ea3; padding-right: 8px; }
.gfoot span { flex: 1; text-align: center; white-space: nowrap; margin-right: 7px; }
.gfoot b { flex: 1; }
.g1 { width: 89px; padding-left: 10px; }
.g2 { width: 287px; padding-left: 11px; }
.g3 { width: 130px; padding-left: 13px; }
.g4 { width: 169px; padding-left: 12px; }
.g5 { width: 138px; padding-left: 7px; }
.g6 { width: 126px; padding-left: 8px; }
.g7 { width: 73px; padding-left: 9px; }
.g8 { width: 104px; padding-left: 4px; }
.g9 { width: 398px; }
.g10 { width: 288px; }
.g11 { width: 32px; border-right: 0; }
.g4 .gfoot { margin-left: -12px; }
.g5 .gfoot { margin-left: -7px; }
.g6 .gfoot { margin-left: -8px; }
.g8 .gfoot { margin-left: -4px; }
.big { display: flex; flex-direction: column; align-items: center; flex: none; }
.bi { height: 37px; display: flex; align-items: flex-start; justify-content: center; width: 40px; }
.bl { font-size: 14px; line-height: 20px; white-space: nowrap; color: #222; }
.big .dd { margin-top: 5px; }
.w70 { width: 70px; }
.w84 { width: 84px; }
.w56 { width: 56px; }
.w28 { width: 28px; }
.w29 { width: 29px; }
.m6 { margin-left: 6px; }
.m7 { margin-left: 7px; }
.m8 { margin-left: 8px; }
.sg { display: grid; grid-auto-rows: 25.5px; margin-top: -1px; flex: none; }
.c24 { grid-template-columns: repeat(2, 24px); }
.c3 { grid-template-columns: repeat(3, 24.5px); }
.c5 { grid-template-columns: repeat(4, 25px) 14px; }
.gc { display: flex; align-items: center; justify-content: center; }
.skbox { width: 104px; height: 77px; box-sizing: border-box; border: 1px solid #ddd; display: grid; grid-template-columns: repeat(4, 25.5px); grid-auto-rows: 25.5px; flex: none; }
.skbox .gc { margin: -2px 0 0 -1px; }
.scroll { width: 22px; height: 77px; display: flex; flex-direction: column; align-items: center; justify-content: space-around; flex: none; }
.dd.bar { position: relative; }
.dd.bar::before { content: ""; position: absolute; left: -4.5px; top: -8px; width: 9px; height: 2px; background: #222; }
.tblrow { height: 26px; display: flex; align-items: center; gap: 1px; font-size: 14px; line-height: 20px; white-space: nowrap; }
.g6 .gbody { margin-top: -3px; height: 83px; }
.sg8 { display: grid; grid-template-columns: 23px 23px 23px 5px 23px; grid-auto-rows: 32px; align-items: center; justify-items: center; height: 64px; }
.srow { height: 32px; display: flex; align-items: center; flex: none; }

.tb2 { height: 35px; display: flex; align-items: center; flex: none; margin-left: 3px; margin-right: 4px; border-bottom: 1px solid #9aa0a6; position: relative; }
.mi { margin-left: 9px; }
.mt { font-size: 15px; line-height: 20px; margin-left: 1px; white-space: nowrap; }
.mt + .dd { margin-left: 5px; }
.sv { margin-left: 4px; }
.sel { width: 440px; height: 24px; box-sizing: border-box; border: 1px solid #aaa; margin-left: 12px; font-size: 15px; line-height: 22px; padding-left: 3px; flex: none; }
.seat.act { background: #c8e4ea; outline: 1px solid #a8ccd6; height: 22px; }
.tb-end { position: absolute; right: 6px; top: 20px; }

.work { flex: 1; min-height: 0; display: flex; border-bottom: 1px solid #aaa; margin-left: 3px; margin-right: 4px; }
.side { width: 32px; flex: none; background: #dcdcdc; border-left: 1px solid #aaa; border-right: 1px solid #aaa; box-sizing: border-box; display: flex; flex-direction: column; }
.si { display: flex; align-items: center; justify-content: center; flex: none; padding-left: 5px; box-sizing: border-box; }
.si.gearcell { margin-bottom: 12px; padding-left: 0; }
.si.on { background: #fff; margin-left: 2px; margin-right: -1px; border: 1px solid #aaa; border-right: 0; padding-left: 0; }
.nav { width: 436px; flex: none; box-sizing: border-box; padding: 0 10px 0 7px; border-right: 1px solid #aaa; display: flex; flex-direction: column; background: #fff; }
.navtitle { height: 33px; font-size: 15px; line-height: 32px; padding-left: 3px; flex: none; }
.tbl { height: 617px; flex: none; overflow: hidden; position: relative; border-left: 1px solid #ddd; border-right: 1px solid #ddd; }
.thead { height: 24px; background: #f0f0f0; border-bottom: 1px solid #ddd; box-sizing: border-box; display: flex; align-items: center; font-size: 15px; line-height: 20px; padding-left: 6px; gap: 17px; }
.row { height: 24px; display: grid; grid-template-columns: 200px 100px 100px 17px; border-bottom: 1px solid #ebebeb; box-sizing: border-box; }
.row.alt { background: #f9f9f9; }
.cell { border-left: 1px solid #ebebeb; }
.cell0 { display: flex; align-items: center; white-space: nowrap; overflow: hidden; }
.exp { width: 11px; height: 11px; box-sizing: border-box; border: 1px solid #ccc; background: linear-gradient(#222, #222) center / 7px 1px no-repeat, #fff; margin-right: 4px; flex: none; }
.exp.plus { background: linear-gradient(#222, #222) center / 7px 1px no-repeat, linear-gradient(#222, #222) center / 1px 7px no-repeat, #fff; }
.exp.none { visibility: hidden; }
.cs { width: 16px; flex: none; display: flex; justify-content: center; }
.rt-text { font-size: 15px; line-height: 20px; margin-left: 3px; }
.dots { position: absolute; left: 0; top: 0; pointer-events: none; }
.split { height: 6px; margin-top: 2px; background: #d4d4d4; border: 1px solid #aaa; border-top-color: #bbb; box-sizing: border-box; flex: none; }
.nsec { height: 28px; box-sizing: border-box; border-bottom: 2px solid #d4d4d4; display: flex; justify-content: space-between; align-items: center; padding: 0 6px; font-size: 18px; line-height: 24px; color: #1c7ea3; flex: none; }
.chev { margin-top: -4px; }

.right { flex: 1; min-width: 0; display: flex; flex-direction: column; }
.doctabs { height: 26px; border-bottom: 2px solid #569fba; box-sizing: border-box; display: flex; flex: none; font-size: 15px; letter-spacing: .25px; line-height: 24px; color: #222; white-space: nowrap; }
.dt { display: flex; align-items: center; gap: 4px; height: 24px; }
.dt span { line-height: 24px; }
.dt.first { width: 273px; justify-content: flex-end; padding-right: 20px; box-sizing: border-box; gap: 3px; }
.dt.on { width: 242px; background: #569fba; color: #fff; padding-left: 4px; box-sizing: border-box; gap: 4px; }
.dt.on em { color: #bcd8e2; font-style: normal; font-weight: 700; font-size: 17px; margin-left: 3px; }
.dt:last-child { padding-left: 5px; }
.canvas { flex: 1; min-height: 0; background: #cbcbcb; position: relative; overflow: hidden; }
.draw { display: block; }
.sheetname { position: absolute; left: 11px; bottom: 3px; font: 13px/16px "Liberation Sans", sans-serif; color: #111; }

.status { height: 22px; flex: none; display: flex; align-items: center; justify-content: space-between; padding: 0 56px 0 6px; font-size: 14px; line-height: 18px; font-weight: 700; color: #222; }
.st-ic { display: flex; gap: 2px; }
.teal { height: 9px; background: #569fba; flex: none; margin: 0 -1px; }

.dialog { position: absolute; left: 176px; top: 157px; width: 380px; height: 318px; background: #eee; box-shadow: 0 0 2px rgba(0,0,0,.25); display: flex; flex-direction: column; z-index: 5; }
.dhead { height: 27px; background: #569fba; display: flex; align-items: center; padding: 0 10px 0 7px; color: #e6f2f6; flex: none; }
.dtitle { font-size: 18px; line-height: 24px; margin-left: 8px; margin-left: 7px; }
.drefresh { margin-left: auto; margin-right: 11px; }
.dsec { margin: 0 6px; background: #fff; border-bottom: 1px solid #d2d2d2; box-sizing: border-box; flex: none; }
.s1 { margin-top: 4px; height: 70px; margin-bottom: 4px; }
.s2 { height: 100px; margin-bottom: 4px; }
.s3 { height: 27px; margin-bottom: 4px; }
.shead { height: 27px; display: flex; align-items: center; justify-content: space-between; font-size: 18px; line-height: 24px; color: #0f7ca2; padding: 0 6px 0 7px; }
.shead.tall { height: 28px; }
.combo { margin: 7px 9px 0; height: 28px; border: 1px solid #aaa; box-sizing: border-box; display: flex; align-items: center; }
.cin { width: 323px; height: 22px; margin-left: 2px; background: #add5e0; outline: 1px dotted #333; outline-offset: -1px; display: flex; align-items: center; gap: 3px; font-size: 15px; line-height: 20px; padding-left: 2px; box-sizing: border-box; }
.combo .dd { margin-left: 9px; }
.pick { margin: 6px 9px 0; display: flex; gap: 2px; height: 32px; }
.pl { width: 316px; background: #ffdf76; display: flex; align-items: center; font-size: 15px; line-height: 20px; }
.pl b { color: #e00; font-size: 24px; width: 20px; padding-left: 2px; box-sizing: border-box; line-height: 20px; margin-top: 7px; }
.pr { flex: 1; background: #ffdf76; display: flex; align-items: center; justify-content: center; }
.chk { margin: 4px 9px 0; display: flex; align-items: center; gap: 3px; font-size: 15px; line-height: 20px; }
.box { width: 18px; height: 18px; border: 1px solid #333; box-sizing: border-box; display: flex; align-items: center; justify-content: center; background: #fff; }
.dbtns { display: flex; gap: 5px; justify-content: flex-end; padding-right: 16px; margin-top: 8px; }
.dbtns button { width: 60px; height: 28px; box-sizing: border-box; border: 1px solid #aaa; background: #eee; font: 15px/20px "Noto Sans CJK SC", sans-serif; color: #222; padding: 0; }
.dbtns button.off { color: #aaa; border-color: #bbb; }

.wm { position: absolute; left: 1559px; top: 896px; display: flex; gap: 9px; pointer-events: none; z-index: 6; }
.wmt { padding-top: 9px; }
.wm1 { font: 700 40px/44px "Liberation Sans", "Noto Sans CJK SC", sans-serif; letter-spacing: 1px; color: rgba(255,255,255,.45); white-space: nowrap; }
.wm2 { font: 400 15px/16px "Liberation Sans", sans-serif; letter-spacing: 2px; color: rgba(255,255,255,.4); white-space: nowrap; }
</style>

<style>
html, body { margin: 0; padding: 0; overflow: hidden; background: #fff; }
</style>
